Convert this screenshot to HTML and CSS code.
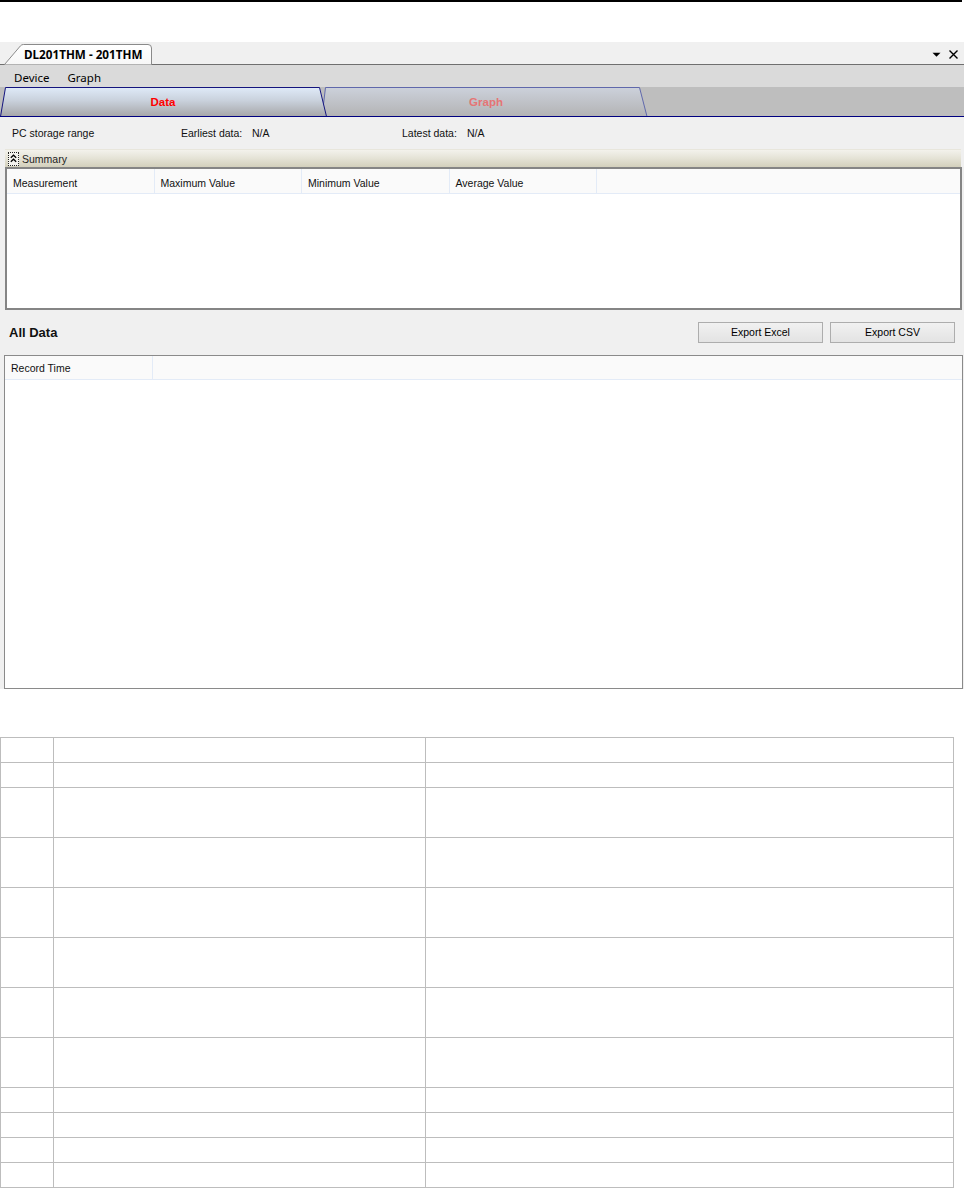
FILE: index.html
```html
<!DOCTYPE html>
<html>
<head>
<meta charset="utf-8">
<title>DL201THM</title>
<link rel="stylesheet" href="styles.css">
</head>
<body>
<div class="topline"></div>
<div class="panel">
  <div class="docstrip">
    <svg class="stack-bg" width="964" height="23" viewBox="0 0 964 23">
      <defs>
        <linearGradient id="gDoc" x1="0" y1="0" x2="0" y2="1">
          <stop offset="0" stop-color="#ffffff"/>
          <stop offset="1" stop-color="#f7f7f7"/>
        </linearGradient>
      </defs>
      <line x1="0" y1="22.5" x2="964" y2="22.5" stroke="#6f6f6f"/>
      <path d="M4.5 22.5 L20.5 3.8 Q21.6 2.5 23.5 2.5 L148 2.5 Q151.5 2.5 151.5 6 L151.5 22.5" fill="url(#gDoc)" stroke="#8a8a8a"/>
      <polygon points="932.5,10.8 940.5,10.8 936.5,14.8" fill="#000"/>
      <path d="M949.5 8.5 L957.5 16.5 M957.5 8.5 L949.5 16.5" stroke="#000" stroke-width="1.4" fill="none"/>
    </svg>
    <div class="doctab-title">DL201THM - 201THM</div>
  </div>
  <div class="menubar">
    <span class="menuitem">Device</span>
    <span class="menuitem">Graph</span>
  </div>
  <div class="tabrow">
    <svg class="stack-bg" width="964" height="30" viewBox="0 0 964 30">
      <defs>
        <linearGradient id="gData" x1="0" y1="0" x2="0" y2="1">
          <stop offset="0" stop-color="#dfeaf8"/>
          <stop offset="0.45" stop-color="#c9d1dc"/>
          <stop offset="1" stop-color="#a6a6a8"/>
        </linearGradient>
        <linearGradient id="gGraph" x1="0" y1="0" x2="0" y2="1">
          <stop offset="0" stop-color="#ccd1db"/>
          <stop offset="1" stop-color="#b3b3b4"/>
        </linearGradient>
      </defs>
      <rect x="0" y="0" width="964" height="30" fill="#bebebe"/>
      <polygon points="322,29.5 325.5,0.5 639.5,0.5 647,29.5" fill="url(#gGraph)" stroke="#6068ab"/>
      <polygon points="0.5,29.5 5.5,0.5 319.5,0.5 326.5,29.5" fill="url(#gData)" stroke="#14147e"/>
      <line x1="0" y1="29.5" x2="964" y2="29.5" stroke="#000080"/>
    </svg>
    <div class="tablabels">
      <span class="tablabel tab-data">Data</span>
      <span class="tablabel tab-graph">Graph</span>
    </div>
  </div>
  <div class="inforow">
    <span class="info-range">PC storage range</span>
    <span class="info-label info-earliest">Earliest data:</span>
    <span class="info-value">N/A</span>
    <span class="info-label info-latest">Latest data:</span>
    <span class="info-value">N/A</span>
  </div>
  <div class="sumbar">
    <span class="sumicon">
      <svg width="7" height="9" viewBox="0 0 7 9"><path d="M0.8 3.8 L3.5 1.2 L6.2 3.8 M0.8 7.8 L3.5 5.2 L6.2 7.8" fill="none" stroke="#000" stroke-width="1.2"/></svg>
    </span>
    <span class="sumtitle">Summary</span>
  </div>
  <div class="sgrid">
    <div class="ghead ghead-sum">
      <span class="gcol">Measurement</span>
      <span class="gcol">Maximum Value</span>
      <span class="gcol">Minimum Value</span>
      <span class="gcol">Average Value</span>
    </div>
  </div>
  <div class="alldata">
    <span class="alldata-title">All Data</span>
    <div class="buttons">
      <button class="btn">Export Excel</button>
      <button class="btn">Export CSV</button>
    </div>
  </div>
  <div class="dgrid">
    <div class="ghead ghead-data">
      <span class="gcol">Record Time</span>
    </div>
  </div>
</div>
<table class="spec">
  <colgroup><col class="c1"><col class="c2"><col class="c3"></colgroup>
  <tr class="h25"><td></td><td></td><td></td></tr>
  <tr class="h25"><td></td><td></td><td></td></tr>
  <tr class="h50"><td></td><td></td><td></td></tr>
  <tr class="h50"><td></td><td></td><td></td></tr>
  <tr class="h50"><td></td><td></td><td></td></tr>
  <tr class="h50"><td></td><td></td><td></td></tr>
  <tr class="h50"><td></td><td></td><td></td></tr>
  <tr class="h50"><td></td><td></td><td></td></tr>
  <tr class="h25"><td></td><td></td><td></td></tr>
  <tr class="h25"><td></td><td></td><td></td></tr>
  <tr class="h25"><td></td><td></td><td></td></tr>
  <tr class="h25"><td></td><td></td><td></td></tr>
</table>
</body>
</html>
```
FILE: styles.css
```css
* { box-sizing: border-box; }
body {
  margin: 0;
  background: #ffffff;
  font-family: "Liberation Sans", Arial, sans-serif;
  font-size: 10.5px;
  color: #000;
}
.topline {
  width: 962px;
  height: 2px;
  background: #000;
}
.panel {
  margin-top: 40px;
  width: 964px;
  height: 647px;
  background: #f0f0f0;
  display: flex;
  flex-direction: column;
}
.docstrip, .tabrow {
  display: grid;
}
.docstrip > *, .tabrow > * {
  grid-area: 1 / 1;
}
.docstrip { height: 23px; }
.stack-bg { display: block; }
.doctab-title {
  font-family: "Noto Sans", sans-serif;
  font-weight: bold;
  font-size: 11.7px;
  line-height: 16px;
  padding: 4px 0 0 24px;
}
.menubar {
  height: 22px;
  background: #dadada;
  display: flex;
  align-items: center;
  padding-left: 14px;
  padding-top: 2px;
  gap: 18px;
  font-family: "Noto Sans", sans-serif;
  font-size: 11.5px;
}
.tabrow { height: 30px; }
.tablabels {
  display: flex;
  height: 30px;
  align-items: center;
  font-family: "Liberation Sans", Arial, sans-serif;
  font-weight: bold;
  font-size: 11.5px;
}
.tablabel { text-align: center; line-height: 30px; }
.tab-data { width: 326px; color: #ff0000; }
.tab-graph { width: 320px; color: #e57575; }
.inforow {
  height: 32px;
  display: flex;
  align-items: center;
  padding-left: 12px;
  color: #111;
}
.info-range { width: 169px; }
.info-label { width: 71px; }
.info-value { width: 150px; }
.info-latest { width: 65px; }
.sumbar {
  height: 18px;
  margin: 0 3px 0 5px;
  display: flex;
  align-items: center;
  gap: 3px;
  padding-left: 3px;
  border-top: 1px solid #e8e6dc;
  background: linear-gradient(#f3f2ec, #e6e4d8 45%, #d3d0bc);
  font-size: 10.5px;
  color: #222;
}
.sumicon {
  width: 11px;
  height: 14px;
  border: 1px dotted #222;
  display: flex;
  align-items: center;
  justify-content: center;
  background: #f4f3ee;
}
.sumicon svg { display: block; }
.sgrid {
  height: 143px;
  margin: 0 2px 0 5px;
  border: 2px solid #858585;
  background: #fff;
}
.ghead {
  height: 25px;
  background: #fafafa;
  border-bottom: 1px solid #e3ebf7;
  display: flex;
}
.gcol {
  width: 147.5px;
  border-right: 1px solid #e3ebf7;
  padding-left: 6px;
  display: flex;
  align-items: center;
  color: #111;
}
.ghead-sum .gcol { padding-top: 3px; }
.alldata {
  height: 45px;
  display: flex;
  align-items: center;
  justify-content: space-between;
  padding: 0 9px 0 9px;
}
.alldata-title {
  font-weight: bold;
  font-size: 13px;
  color: #111;
}
.buttons {
  display: flex;
  gap: 7px;
  margin-top: -1px;
}
.btn {
  width: 125px;
  height: 21px;
  border: 1px solid #adadad;
  background: linear-gradient(#f1f1f1, #e3e3e3);
  font-family: "Liberation Sans", Arial, sans-serif;
  font-size: 10.5px;
  color: #000;
  padding: 0;
  border-radius: 0;
}
.dgrid {
  height: 334px;
  margin: 0 1px 0 4px;
  border: 1px solid #8a8a8a;
  background: #fff;
}
.ghead-data {
  height: 24px;
  padding-left: 0;
}
.ghead-data .gcol { width: 148px; }
.spec {
  margin-top: 48px;
  width: 953px;
  border-collapse: collapse;
  table-layout: fixed;
}
.spec td {
  border: 1px solid #bdbdbd;
  padding: 0;
}
.c1 { width: 53px; }
.c2 { width: 372px; }
.c3 { width: 528px; }
.h25 { height: 25px; }
.h50 { height: 50px; }
```
